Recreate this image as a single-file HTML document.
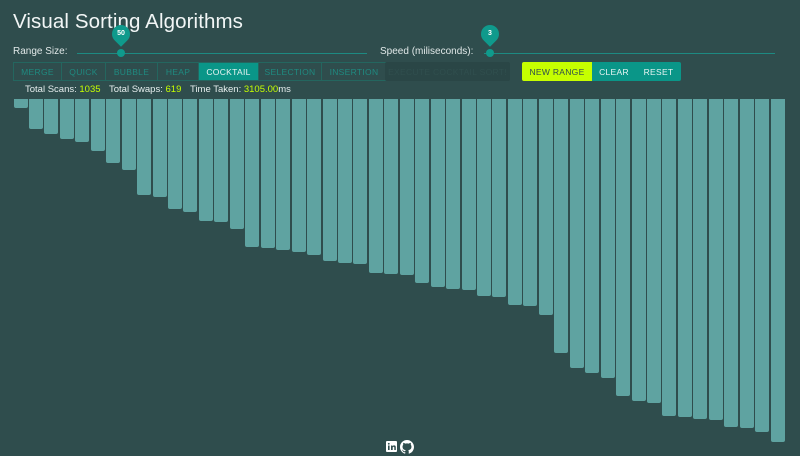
<!DOCTYPE html>
<html><head><style>
*{margin:0;padding:0;box-sizing:border-box}
body{width:800px;height:456px;background:#2f4d4d;font-family:"Liberation Sans",sans-serif;position:relative;overflow:hidden;color:#e6eeee}
.a{position:absolute}
h1{position:absolute;left:13px;top:10px;font-size:20.5px;font-weight:normal;color:#f2f6f6;letter-spacing:0.1px}
.lbl{font-size:10px;color:#e0e8e8}
.track{height:1px;background:#1d8a82}
.thumb{width:8px;height:8px;border-radius:50%;background:#0f9a8c}
.pin{width:18px;height:18px;border-radius:50% 50% 50% 0;transform:rotate(-45deg);background:#0f9a8c}
.pint{font-size:7px;color:#fff;width:18px;text-align:center;font-weight:bold}
.bg{position:absolute;top:62px;height:19px;border:1px solid #24665f;display:flex}
.bg div{font-size:8.5px;color:#1f8a80;display:flex;align-items:center;justify-content:center;border-right:1px solid #24665f;letter-spacing:0.3px}
.bg div.on{background:#0a9688;color:#e8f5f3}
.btn{position:absolute;top:62px;height:19px;font-size:8.5px;display:flex;align-items:center;justify-content:center;letter-spacing:0.3px}
.stat{font-size:9.5px;color:#e6eeee}
.stat b{font-weight:normal;color:#c6ff00}
.bar{position:absolute;top:99px;width:14px;background:#5fa3a1;border-radius:0 0 2px 2px}
</style></head><body>
<h1>Visual Sorting Algorithms</h1>
<div class="a lbl" style="left:13px;top:46px">Range Size:</div>
<div class="a track" style="left:77px;top:53px;width:290px"></div>
<div class="a thumb" style="left:117px;top:49px"></div>
<div class="a pin" style="left:112px;top:25px"></div>
<div class="a pint" style="left:112px;top:30px">50</div>
<div class="a lbl" style="left:380px;top:46px">Speed (miliseconds):</div>
<div class="a track" style="left:484px;top:53px;width:291px"></div>
<div class="a thumb" style="left:486px;top:49px"></div>
<div class="a pin" style="left:481px;top:25px"></div>
<div class="a pint" style="left:481px;top:30px">3</div>
<div class="bg" style="left:13px">
<div style="width:48px">MERGE</div><div style="width:44px">QUICK</div><div style="width:52px">BUBBLE</div><div style="width:41px">HEAP</div><div class="on" style="width:60px">COCKTAIL</div><div style="width:63px">SELECTION</div><div style="width:64px;border-right:none">INSERTION</div>
</div>
<div class="btn" style="left:385px;width:125px;background:#2a4646;color:#304f4e;border-radius:2px">EXECUTE COCKTAIL SORT!</div>
<div class="btn" style="left:522px;width:70px;background:#c6ff00;color:#2f4d4d;border-radius:2px 0 0 2px">NEW RANGE</div>
<div class="btn" style="left:592px;width:44px;background:#0a9688;color:#e8f5f3">CLEAR</div>
<div class="btn" style="left:636px;width:45px;background:#0a9688;color:#e8f5f3;border-radius:0 2px 2px 0">RESET</div>
<div class="a stat" style="left:25px;top:84px">Total Scans: <b>1035</b></div>
<div class="a stat" style="left:109px;top:84px">Total Swaps: <b>619</b></div>
<div class="a stat" style="left:190px;top:84px">Time Taken: <b>3105.00</b>ms</div>
<div id="bars"></div>
<svg class="a" style="left:386px;top:441px" width="12" height="12" viewBox="0 0 12 12"><rect width="11" height="11" rx="1" fill="#fff"/><rect x="2" y="4.5" width="1.6" height="4.5" fill="#2f4d4d"/><circle cx="2.8" cy="2.8" r="0.9" fill="#2f4d4d"/><path d="M5 4.5h1.5v.8c.4-.6 1-.9 1.7-.9 1.2 0 1.6.8 1.6 2V9H8.3V6.8c0-.6-.2-1-.7-1s-.9.4-.9 1V9H5z" fill="#2f4d4d"/></svg>
<svg class="a" style="left:400px;top:440px" width="14" height="14" viewBox="0 0 16 16"><path fill="#fff" d="M8 0C3.58 0 0 3.58 0 8c0 3.540 2.290 6.530 5.470 7.590.4.07.55-.17.55-.38v-1.330c-2.230.48-2.7-1.070-2.7-1.070-.36-.92-.89-1.170-.89-1.170-.73-.5.05-.49.05-.49.8.06 1.230.83 1.230.83.71 1.220 1.870.87 2.330.66.07-.52.28-.87.5-1.070-1.780-.2-3.640-.89-3.640-3.950 0-.87.31-1.590.82-2.150-.08-.2-.36-1.020.08-2.120 0 0 .67-.21 2.200.82a7.600 7.600 0 0 1 4 0c1.530-1.040 2.200-.82 2.200-.82.44 1.100.16 1.920.08 2.120.51.56.82 1.270.82 2.150 0 3.070-1.870 3.750-3.650 3.950.29.25.54.73.54 1.480v2.200c0 .21.15.46.55.38A8 8 0 0 0 16 8c0-4.420-3.580-8-8-8z"/></svg>
<script>
var b=[108,129.3,134.3,139,142.3,151,163,170,195,197,208.7,212,221.3,222,228.7,246.7,248.3,250,252.3,255.3,260.7,262.7,264.3,272.7,273.7,274.7,283,287.3,288.7,290,296,296.7,305,306,315.3,353.3,368.3,373.3,378.3,396,401.3,403,416,417.3,418.7,420,426.7,428.3,431.7,442.3];
var h='';for(var k=0;k<50;k++){h+='<div class="bar" style="left:'+(13.5+15.45*k).toFixed(2)+'px;height:'+(b[k]-99).toFixed(1)+'px"></div>';}
document.getElementById('bars').innerHTML=h;
</script>
</body></html>
